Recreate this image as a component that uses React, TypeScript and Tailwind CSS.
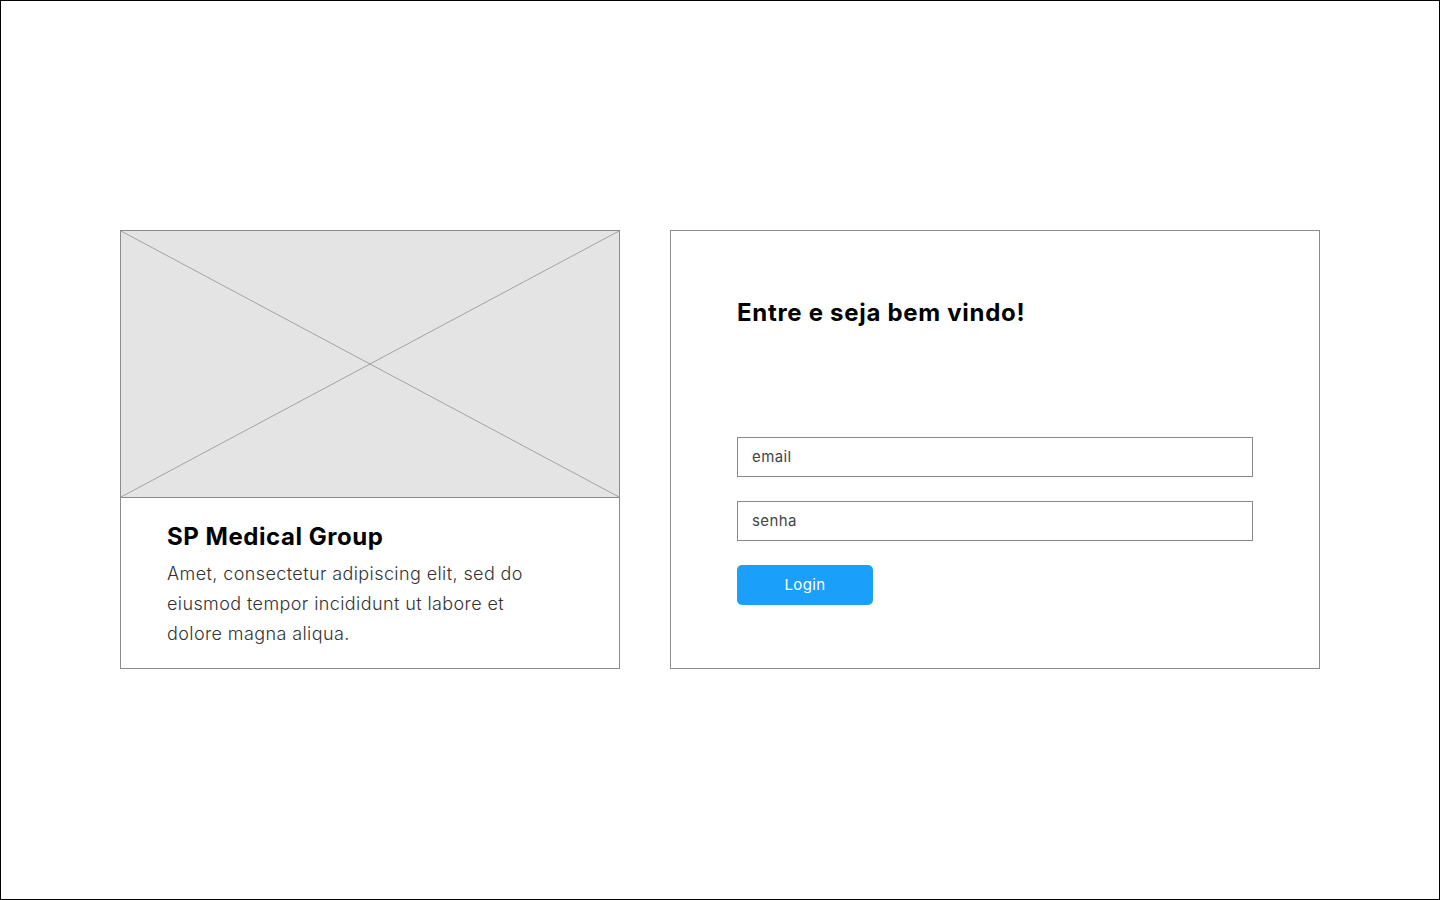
import React from "react";

export default function App() {
  const font = { fontFamily: "Inter, 'Open Sans', sans-serif" };
  return (
    <div
      className="w-[1440px] h-[900px] border border-black bg-white flex items-start justify-center gap-[50px] pt-[229px]"
      style={font}
    >
      <div className="w-[500px] h-[439px] border border-[#8c8c8c] flex flex-col">
        <div className="h-[267px] border-b border-[#8c8c8c] bg-[#e4e4e4]">
          <svg width="498" height="266" viewBox="0 0 498 266" className="block">
            <line x1="0" y1="0" x2="498" y2="266" stroke="#a3a3a3" strokeWidth="1" />
            <line x1="498" y1="0" x2="0" y2="266" stroke="#a3a3a3" strokeWidth="1" />
          </svg>
        </div>
        <div className="pl-[46px] pr-[40px] pt-[23px]">
          <h2 className="text-[24px] leading-[32px] font-bold text-black tracking-[0.55px]">SP Medical Group</h2>
          <p className="mt-[6px] text-[18px] leading-[30px] text-[#333333] font-light tracking-[0.4px] w-[370px]">
            Amet, consectetur adipiscing elit, sed do eiusmod tempor incididunt ut labore et dolore magna aliqua.
          </p>
        </div>
      </div>
      <div className="w-[650px] h-[439px] border border-[#8c8c8c] pl-[66px] pt-[66px] flex flex-col">
        <h1 className="text-[24px] leading-[32px] font-bold text-black tracking-[0.7px]">Entre e seja bem vindo!</h1>
        <div className="mt-[108px] w-[516px] h-[40px] border border-[#8a8a8a] flex items-center pl-[14px] text-[15px] text-[#444444] tracking-[0.4px]">
          email
        </div>
        <div className="mt-[24px] w-[516px] h-[40px] border border-[#8a8a8a] flex items-center pl-[14px] text-[15px] text-[#444444] tracking-[0.4px]">
          senha
        </div>
        <button className="mt-[24px] w-[136px] h-[40px] rounded-[5px] bg-[#1aa0fb] text-white text-[15px] tracking-[0.4px] flex items-center justify-center">
          Login
        </button>
      </div>
    </div>
  );
}
